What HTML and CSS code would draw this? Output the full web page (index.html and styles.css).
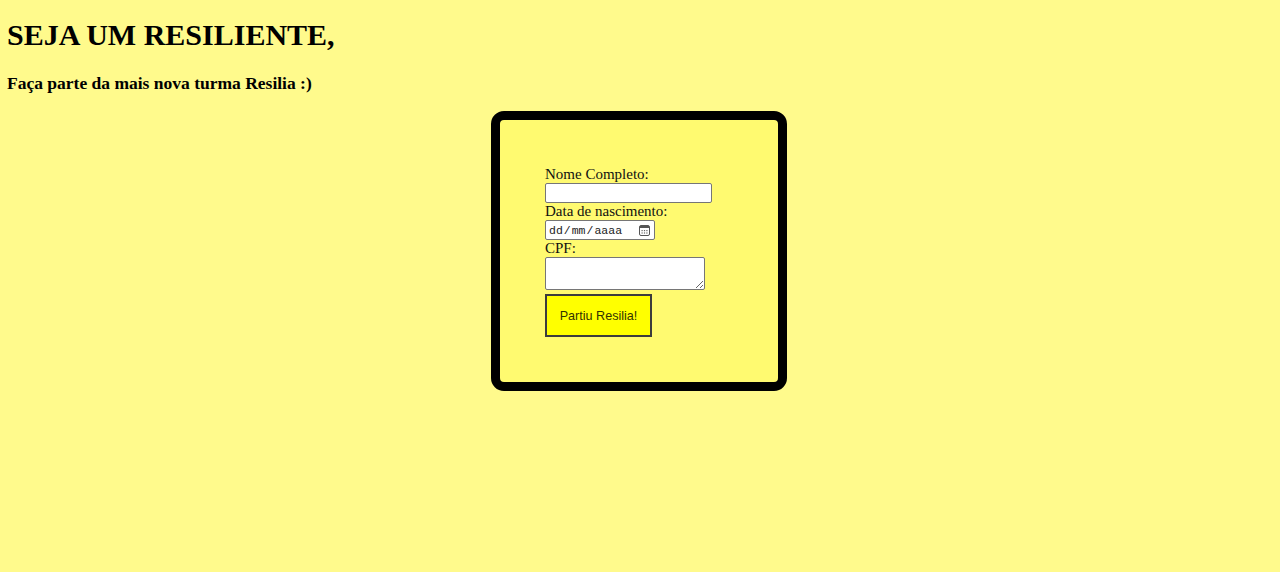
FILE: index.html
```html
<!DOCTYPE html>
<html lang="pt-BR">
<head>
<meta charset="utf-8">
<title>Resilia</title>
<link rel="stylesheet" href="styles.css">
</head>
<body>
<h1 class="title">SEJA UM RESILIENTE,</h1>
<h3 class="subtitle">Faça parte da mais nova turma Resilia :)</h3>
<div class="card">
  <form class="form">
    <label class="label" for="nome">Nome Completo:</label>
    <input class="field text" id="nome" type="text">
    <label class="label" for="nasc">Data de nascimento:</label>
    <div class="field date" id="nasc" role="textbox">
      <span class="date-text">dd<span class="slash">/</span>mm<span class="slash">/</span>aaaa</span>
      <svg class="cal" width="11" height="11" viewBox="0 0 11 11" aria-hidden="true">
        <rect x="0.5" y="0.5" width="10" height="10" rx="1.5" fill="none" stroke="#555" stroke-width="1"/>
        <rect x="1" y="1" width="9" height="2" fill="#555"/>
        <rect x="2.5" y="5" width="1.2" height="1.2" fill="#666"/>
        <rect x="4.9" y="5" width="1.2" height="1.2" fill="#666"/>
        <rect x="7.3" y="5" width="1.2" height="1.2" fill="#666"/>
        <rect x="2.5" y="7.4" width="1.2" height="1.2" fill="#666"/>
        <rect x="4.9" y="7.4" width="1.2" height="1.2" fill="#666"/>
        <rect x="7.3" y="7.4" width="1.2" height="1.2" fill="#666"/>
      </svg>
    </div>
    <label class="label" for="cpf">CPF:</label>
    <textarea class="field area" id="cpf"></textarea>
    <button class="btn" type="button">Partiu Resilia!</button>
  </form>
</div>
</body>
</html>
```
FILE: styles.css
```css
html, body {
  background: #fffa8c;
}
body {
  margin: 0 9px 0 7px;
  font-family: "Liberation Serif", "Times New Roman", serif;
  color: #000;
}
.title {
  font-size: 30px;
  font-weight: bold;
  margin: 18px 0 0;
  line-height: 34px;
}
.subtitle {
  font-size: 17.5px;
  font-weight: bold;
  margin: 21px 0 0;
  line-height: 20px;
}
.card {
  width: 278px;
  margin: 18px auto 0;
  border: 9px solid #000;
  border-radius: 13px;
  background: #fffa70;
  padding: 46px 0 45px;
}
.form {
  display: flex;
  flex-direction: column;
  align-items: flex-start;
  padding-left: 45px;
}
.label {
  font-size: 15px;
  line-height: 17px;
  color: #111;
}
.field {
  font-family: "Liberation Sans", Arial, sans-serif;
  font-size: 13px;
  border: 1px solid #767676;
  border-radius: 2px;
  background: #fff;
  margin: 0;
  box-sizing: border-box;
}
.text {
  width: 167px;
  height: 20px;
  padding: 1px 2px;
}
.date {
  width: 110px;
  height: 20px;
  padding: 0 4px 0 3px;
  display: flex;
  align-items: center;
  justify-content: space-between;
}
.date-text {
  font-family: "Liberation Mono", "Courier New", monospace;
  font-size: 11.5px;
  color: #222;
}
.slash {
  margin: 0 1px;
}
.cal {
  display: block;
}
.area {
  width: 160px;
  height: 33px;
  padding: 2px;
  resize: both;
}
.btn {
  margin-top: 4px;
  width: 107px;
  height: 43px;
  background: #ffff00;
  border: 2px solid #3c3c3c;
  font-family: "Liberation Sans", Arial, sans-serif;
  font-size: 12.6px;
  color: #333300;
  padding: 0;
}
```
